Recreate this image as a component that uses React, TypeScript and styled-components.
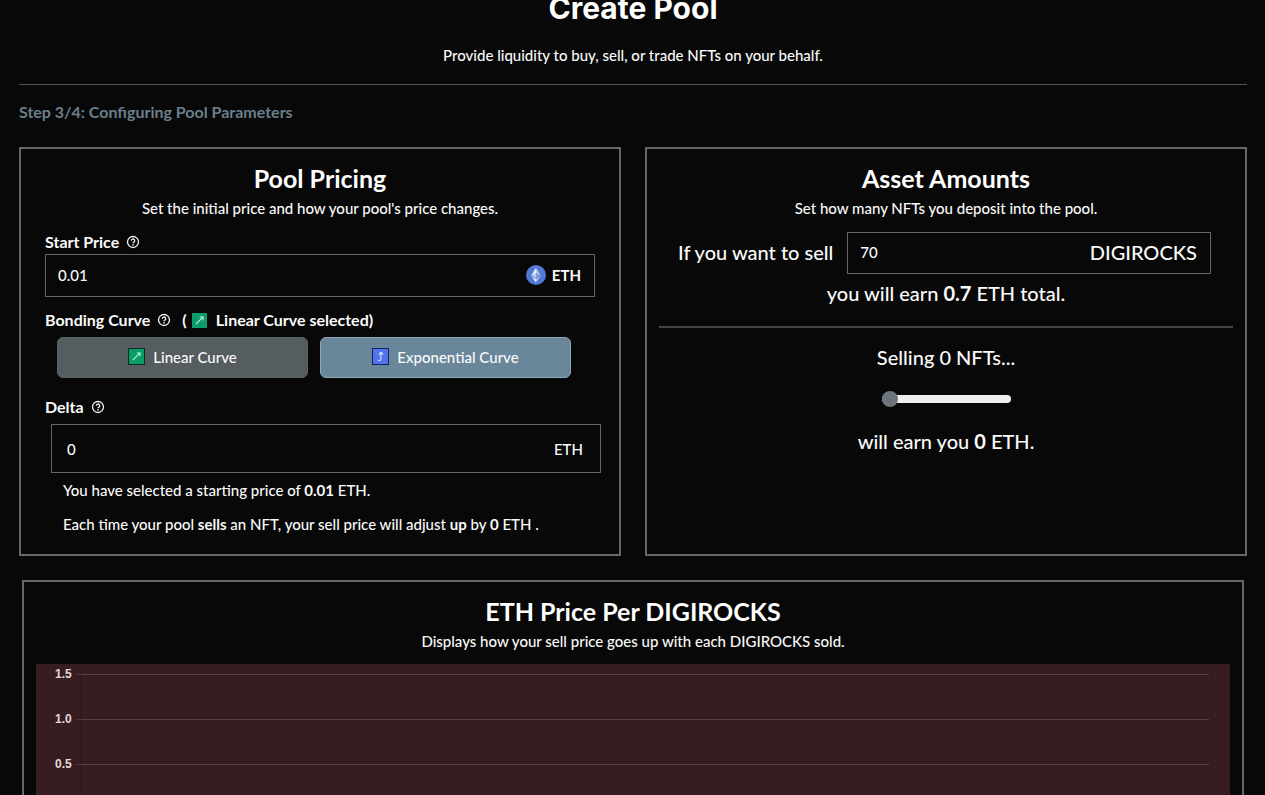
import React, { useState } from 'react';
import styled, { createGlobalStyle } from 'styled-components';

const GlobalStyle = createGlobalStyle`
  *, *::before, *::after { box-sizing: border-box; }
  html, body { margin: 0; background: #080808; }
  body {
    color: #fafafa;
    font-family: Lato, "Liberation Sans", sans-serif;
    font-size: 15px;
    font-weight: 500;
    line-height: 24px;
  }
  h1, h2, p { margin: 0; }
  button, input { font: inherit; color: inherit; }
`;

const Page = styled.main`
  height: 100vh;
  overflow: hidden;
  padding: 0 18px 0 19px;
`;

const Header = styled.header`
  margin-top: -12px;
  padding-bottom: 17px;
  border-bottom: 1px solid #555;
  text-align: center;
`;

const PageTitle = styled.h1`
  font-family: Inter, sans-serif;
  font-size: 30px;
  font-weight: 700;
  line-height: 40px;
  color: #fff;
`;

const Intro = styled.p`
  margin-top: 15px;
`;

const Step = styled.p`
  margin: 15px 0 23px;
  font-size: 16px;
  font-weight: 700;
  color: #6b7f8c;
`;

const Columns = styled.div`
  display: grid;
  grid-template-columns: 1fr 1fr;
  gap: 24px;
`;

const Panel = styled.section<{ $inset: number }>`
  padding: 13px ${(p) => p.$inset}px 18px;
  border: 2px solid #666;
`;

const ChartPanel = styled(Panel)`
  margin: 24px 3px 0;
`;

const PanelTitle = styled.h2`
  margin-bottom: 1px;
  font-size: 25px;
  font-weight: 700;
  line-height: 32px;
  text-align: center;
  color: #fff;
`;

const PanelText = styled.p`
  line-height: 26px;
  text-align: center;
`;

const LabelRow = styled.div<{ $top: number }>`
  display: flex;
  align-items: center;
  gap: 7px;
  margin-top: ${(p) => p.$top}px;
  font-size: 16px;
  font-weight: 700;
`;

const Selected = styled.span`
  display: flex;
  align-items: center;
  gap: 5px;
  margin-left: 4px;

  svg { margin-right: 4px; }
`;

const Field = styled.div<{ $height: number }>`
  display: flex;
  align-items: center;
  flex: 1;
  height: ${(p) => p.$height}px;
  padding: 0 13px 2px 12px;
  border: 1px solid #666;
`;

const DeltaField = styled(Field)`
  margin: 5px -6px 5px 6px;
  padding: 0 17px 0 15px;
`;

const TextInput = styled.input`
  flex: 1;
  min-width: 0;
  padding: 0;
  border: 0;
  outline: 0;
  background: transparent;
`;

const Unit = styled.span<{ $large?: boolean; $strong?: boolean }>`
  display: flex;
  align-items: center;
  gap: 6px;
  font-size: ${(p) => (p.$large ? 20 : 15)}px;
  font-weight: ${(p) => (p.$strong ? 700 : 500)};
`;

const CurveButtons = styled.div`
  display: grid;
  grid-template-columns: 1fr 1fr;
  gap: 12px;
  margin: 5px 24px 0 12px;
`;

const CurveButton = styled.button<{ $active?: boolean }>`
  display: flex;
  align-items: center;
  justify-content: center;
  gap: 8px;
  height: 41px;
  padding: 0 6px 2px;
  border: 1px solid ${(p) => (p.$active ? '#8fa6b6' : '#5b6467')};
  border-radius: 6px;
  background: ${(p) => (p.$active ? '#69869b' : '#555d61')};
`;

const Note = styled.p`
  padding-left: 18px;

  & + & { margin-top: 10px; }
`;

const SellRow = styled.div`
  display: flex;
  align-items: center;
  gap: 14px;
  margin: 11px 22px 4px 19px;

  label { padding-bottom: 2px; font-size: 20px; }
`;

const Statement = styled.p`
  font-size: 20px;
  line-height: 30px;
  text-align: center;
`;

const SliderLabel = styled.label`
  display: block;
  font-size: 20px;
  line-height: 30px;
  text-align: center;
`;

const Divider = styled.hr`
  height: 2px;
  margin: 18px 0 14px;
  border: 0;
  background: #444;
`;

const Slider = styled.input`
  display: block;
  width: 129px;
  height: 16px;
  margin: 19px auto;
  appearance: none;
  background: transparent;

  &::-webkit-slider-runnable-track {
    height: 8px;
    border-radius: 4px;
    background: #efefef;
  }
  &::-webkit-slider-thumb {
    appearance: none;
    width: 16px;
    height: 16px;
    margin-top: -4px;
    border-radius: 50%;
    background: #6c757b;
  }
`;

const Chart = styled.div`
  height: 400px;
  margin-top: 10px;
  padding: 2px 21px 0 19px;
  background: #371c22;
`;

const ChartRow = styled.div`
  display: grid;
  grid-template-columns: 18px 6px 1fr;
  column-gap: 2px;
  height: 45px;
  font: 700 12px/16px "Liberation Sans", sans-serif;
  color: #e2d8da;
`;

const Tick = styled.span`
  height: 1px;
  margin-top: 8px;
  background: #4d3338;
`;

const Plot = styled.span`
  margin: 8px 0 -8px -2px;
  border-top: 1px solid #583f44;
  border-left: 1px solid #28131a;
`;

function HelpIcon() {
  return (
    <svg width="14" height="14" viewBox="0 0 14 14" fill="none" stroke="#f4f4f4" strokeWidth="1.3" aria-hidden="true">
      <circle cx="7" cy="7" r="5.5" />
      <path d="M5.3 5.7a1.7 1.7 0 1 1 2.5 1.5c-.6.3-.8.6-.8 1.1" />
      <path d="M7 9.1v1.3" />
    </svg>
  );
}

function CurveIcon({ kind, outlined }: { kind: 'linear' | 'exponential'; outlined?: boolean }) {
  const linear = kind === 'linear';
  const size = outlined ? 17 : 15;
  return (
    <svg width={size} height={size} viewBox={outlined ? '0 0 17 17' : '1 1 15 15'} fill="none" aria-hidden="true">
      <rect
        x="0.5" y="0.5" width="16" height="16"
        fill={linear ? '#0a9d6a' : '#5373ec'}
        stroke={linear ? '#052d24' : '#10245a'}
      />
      {linear ? (
        <path d="M4.8 12.2 11.8 5.2M8.8 5h3.3v3.3" stroke="#b9f5d6" strokeWidth="1.1" />
      ) : (
        <path d="M6.2 12.5h1.3q1.4 0 1.4-1.4V4.4M6.8 6.5l2.1-2.2L11 6.5" stroke="#d9e3ff" strokeWidth="1.1" />
      )}
    </svg>
  );
}

function EthIcon() {
  return (
    <svg width="20" height="20" viewBox="0 0 20 20" aria-hidden="true">
      <circle cx="10" cy="10" r="10" fill="#5378d4" />
      <path d="M10 2.5 5.4 10.2 10 12.9z" fill="#e3eafa" />
      <path d="M10 2.5 14.6 10.2 10 12.9z" fill="#b3c4ee" />
      <path d="M10 8.1 5.4 10.2 10 12.9z" fill="#b9c9ef" />
      <path d="M10 8.1 14.6 10.2 10 12.9z" fill="#7c98dd" />
      <path d="M5.4 11.2 10 17.5v-3.6z" fill="#e3eafa" />
      <path d="M14.6 11.2 10 17.5v-3.6z" fill="#b3c4ee" />
    </svg>
  );
}

export default function App() {
  const [price, setPrice] = useState('0.01');
  const [delta, setDelta] = useState('0');
  const [amount, setAmount] = useState('70');
  const [selling, setSelling] = useState(0);

  return (
    <Page>
      <GlobalStyle />
      <Header>
        <PageTitle>Create Pool</PageTitle>
        <Intro>Provide liquidity to buy, sell, or trade NFTs on your behalf.</Intro>
      </Header>
      <Step>Step 3/4: Configuring Pool Parameters</Step>

      <Columns>
        <Panel $inset={24}>
          <PanelTitle>Pool Pricing</PanelTitle>
          <PanelText>Set the initial price and how your pool's price changes.</PanelText>

          <LabelRow $top={9}>
            <label htmlFor="price">Start Price</label>
            <HelpIcon />
          </LabelRow>
          <Field $height={43}>
            <TextInput id="price" value={price} onChange={(e) => setPrice(e.target.value)} />
            <Unit $strong><EthIcon />ETH</Unit>
          </Field>

          <LabelRow $top={11}>
            <span>Bonding Curve</span>
            <HelpIcon />
            <Selected>(<CurveIcon kind="linear" />Linear Curve selected)</Selected>
          </LabelRow>
          <CurveButtons>
            <CurveButton type="button"><CurveIcon kind="linear" outlined />Linear Curve</CurveButton>
            <CurveButton type="button" $active><CurveIcon kind="exponential" outlined />Exponential Curve</CurveButton>
          </CurveButtons>

          <LabelRow $top={17}>
            <label htmlFor="delta">Delta</label>
            <HelpIcon />
          </LabelRow>
          <DeltaField $height={49}>
            <TextInput id="delta" value={delta} onChange={(e) => setDelta(e.target.value)} />
            <Unit>ETH</Unit>
          </DeltaField>
          <Note>You have selected a starting price of <b>0.01</b> ETH.</Note>
          <Note>Each time your pool <b>sells</b> an NFT, your sell price will adjust <b>up</b> by <b>0</b> ETH .</Note>
        </Panel>

        <Panel $inset={12}>
          <PanelTitle>Asset Amounts</PanelTitle>
          <PanelText>Set how many NFTs you deposit into the pool.</PanelText>
          <SellRow>
            <label htmlFor="amount">If you want to sell</label>
            <Field $height={42}>
              <TextInput id="amount" value={amount} onChange={(e) => setAmount(e.target.value)} />
              <Unit $large>DIGIROCKS</Unit>
            </Field>
          </SellRow>
          <Statement>you will earn <b>0.7</b> ETH total.</Statement>
          <Divider />
          <SliderLabel htmlFor="selling">Selling {selling} NFTs...</SliderLabel>
          <Slider id="selling" type="range" min={0} max={70} value={selling} onChange={(e) => setSelling(Number(e.target.value))} />
          <Statement>will earn you <b>0</b> ETH.</Statement>
        </Panel>
      </Columns>

      <ChartPanel $inset={12}>
        <PanelTitle>ETH Price Per DIGIROCKS</PanelTitle>
        <PanelText>Displays how your sell price goes up with each DIGIROCKS sold.</PanelText>
        <Chart>
          {['1.5', '1.0', '0.5'].map((value) => (
            <ChartRow key={value}><span>{value}</span><Tick /><Plot /></ChartRow>
          ))}
        </Chart>
      </ChartPanel>
    </Page>
  );
}
